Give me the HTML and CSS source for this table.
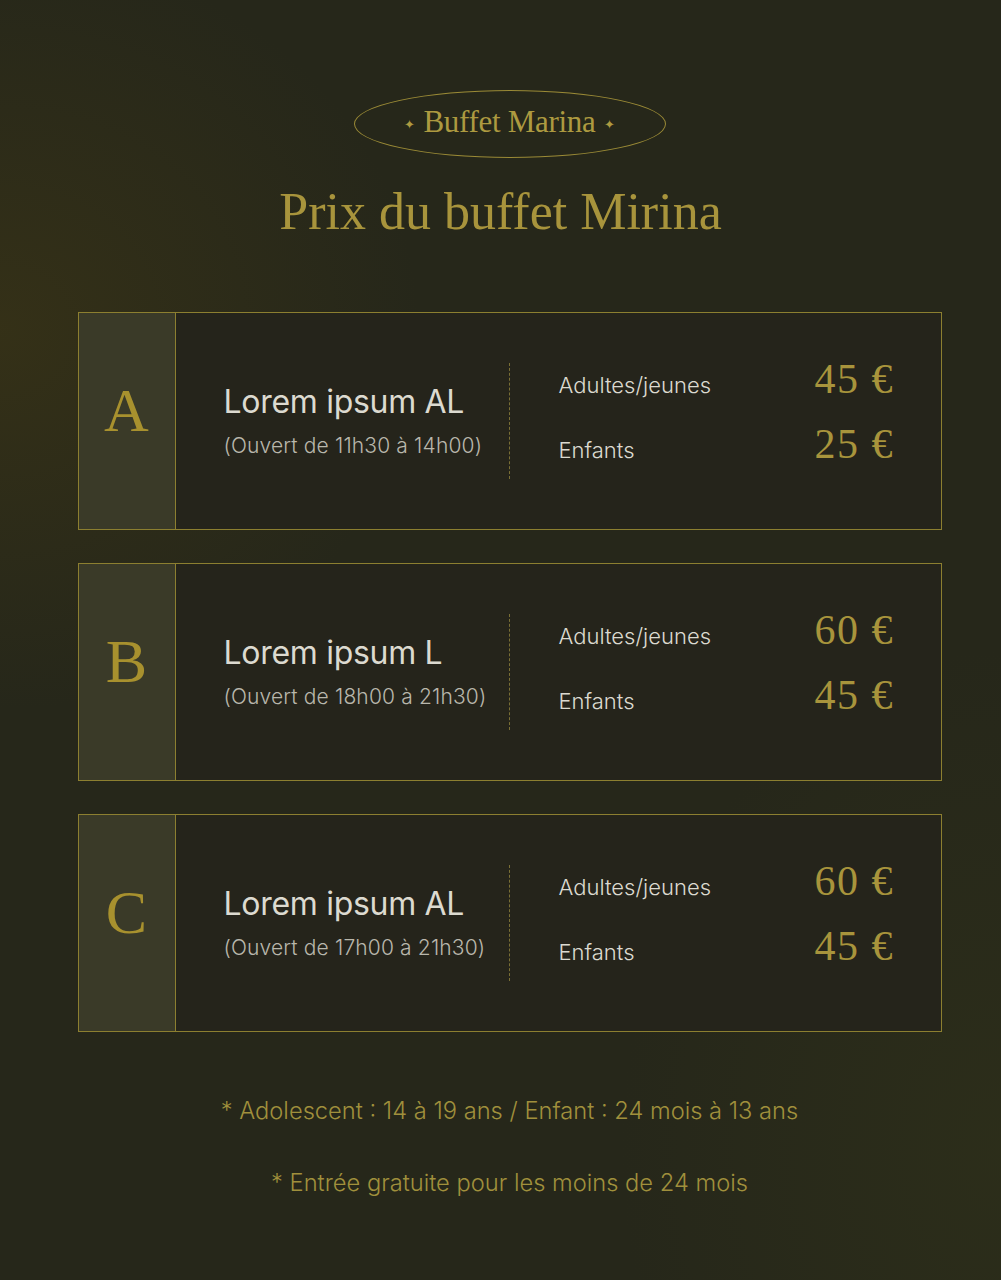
FILE: index.html
```html
<!DOCTYPE html>
<html lang="fr">
<head>
<meta charset="utf-8">
<title>Prix du buffet Mirina</title>
<link rel="stylesheet" href="styles.css">
</head>
<body>
<main class="page">
  <header class="head">
    <div class="badge"><span class="star">✦</span><span class="badge-text">Buffet Marina</span><span class="star">✦</span></div>
    <h1 class="title">Prix du buffet Mirina</h1>
  </header>

  <section class="cards">
    <article class="card">
      <div class="letter">A</div>
      <div class="name">
        <div class="name-main">Lorem ipsum AL</div>
        <div class="name-sub">(Ouvert de 11h30 à 14h00)</div>
      </div>
      <div class="divider"></div>
      <div class="prices">
        <span class="label">Adultes/jeunes</span><span class="price">45 €</span>
        <span class="label">Enfants</span><span class="price">25 €</span>
      </div>
    </article>

    <article class="card">
      <div class="letter">B</div>
      <div class="name">
        <div class="name-main">Lorem ipsum L</div>
        <div class="name-sub">(Ouvert de 18h00 à 21h30)</div>
      </div>
      <div class="divider"></div>
      <div class="prices">
        <span class="label">Adultes/jeunes</span><span class="price">60 €</span>
        <span class="label">Enfants</span><span class="price">45 €</span>
      </div>
    </article>

    <article class="card">
      <div class="letter">C</div>
      <div class="name">
        <div class="name-main">Lorem ipsum AL</div>
        <div class="name-sub">(Ouvert de 17h00 à 21h30)</div>
      </div>
      <div class="divider"></div>
      <div class="prices">
        <span class="label">Adultes/jeunes</span><span class="price">60 €</span>
        <span class="label">Enfants</span><span class="price">45 €</span>
      </div>
    </article>
  </section>

  <footer class="notes">
    <p class="note">* Adolescent : 14 à 19 ans / Enfant : 24 mois à 13 ans</p>
    <p class="note">* Entrée gratuite pour les moins de 24 mois</p>
  </footer>
</main>
</body>
</html>
```

FILE: styles.css
```css
* { box-sizing: border-box; }
html, body { margin: 0; padding: 0; }
body {
  width: 1001px;
  height: 1280px;
  overflow: hidden;
  background:
    radial-gradient(ellipse 420px 380px at 0px 330px, rgba(70, 60, 20, 0.45), rgba(70, 60, 20, 0) 100%),
    radial-gradient(ellipse 380px 500px at 1001px 1150px, rgba(50, 52, 26, 0.5), rgba(50, 52, 26, 0) 100%),
    #26271a;
  font-family: "Inter", "Liberation Sans", sans-serif;
}
.page {
  display: flex;
  flex-direction: column;
  align-items: center;
  padding-top: 90px;
  padding-left: 18px;
}
.head {
  display: flex;
  flex-direction: column;
  align-items: center;
}
.badge {
  width: 312px;
  height: 68px;
  border: 1.5px solid #9a8a36;
  border-radius: 50%;
  display: flex;
  align-items: center;
  justify-content: center;
  gap: 8px;
  color: #ad9a40;
  font-family: "Liberation Serif", serif;
}
.badge-text {
  font-size: 31px;
  line-height: 1;
  letter-spacing: -0.3px;
  position: relative;
  top: -3px;
}
.star { font-size: 13px; line-height: 1; }
.title {
  margin: 24px 18px 0 0;
  font-family: "Liberation Serif", serif;
  font-weight: 400;
  font-size: 52px;
  line-height: 60px;
  color: #a8943c;
}
.cards {
  margin-top: 70px;
  display: flex;
  flex-direction: column;
  gap: 33px;
}
.card {
  width: 864px;
  height: 218px;
  border: 1px solid #8c7f30;
  background: #25241b;
  display: flex;
  align-items: center;
}
.letter {
  width: 97px;
  align-self: stretch;
  background: #3a3a28;
  border-right: 1px solid #8c7f30;
  display: flex;
  align-items: center;
  justify-content: center;
  padding-bottom: 22px;
  font-family: "Liberation Serif", serif;
  font-size: 62px;
  color: #a8912e;
}
.name {
  width: 285px;
  padding-left: 48px;
  display: flex;
  flex-direction: column;
  gap: 12px;
  white-space: nowrap;
}
.name-main {
  font-size: 32px;
  line-height: 38px;
  color: #dcdad0;
  letter-spacing: -0.3px;
}
.name-sub {
  font-size: 21px;
  line-height: 26px;
  font-weight: 300;
  letter-spacing: 0.15px;
  color: #b9b7ac;
}
.divider {
  width: 0;
  height: 116px;
  border-left: 1.5px dashed #7a6f35;
  margin-left: 48px;
}
.prices {
  margin-left: 49px;
  width: 334px;
  display: grid;
  grid-template-columns: 1fr auto;
  align-items: baseline;
  row-gap: 16px;
  margin-top: -12px;
}
.label {
  font-size: 22px;
  font-weight: 300;
  color: #dcdad0;
  line-height: 43px;
}
.price {
  font-family: "Liberation Serif", serif;
  font-size: 42px;
  line-height: 43px;
  letter-spacing: 1.5px;
  margin-right: -1.5px;
  color: #a8943c;
}
.notes {
  margin-top: 65px;
  display: flex;
  flex-direction: column;
  align-items: center;
  gap: 44px;
}
.note {
  margin: 0;
  font-size: 23.7px;
  line-height: 28px;
  font-weight: 300;
  color: #a0903c;
}
```
